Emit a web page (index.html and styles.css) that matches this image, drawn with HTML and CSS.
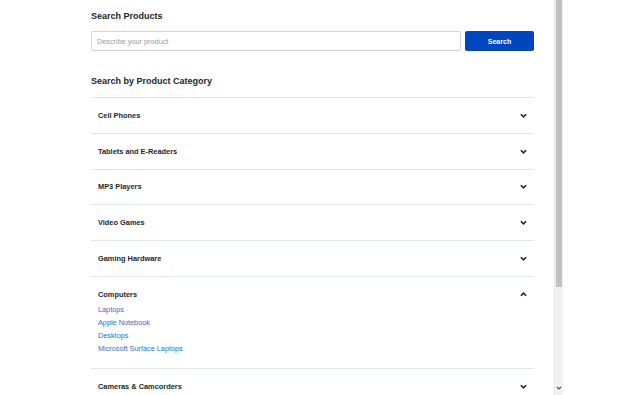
FILE: index.html
```html
<!DOCTYPE html>
<html lang="en">
<head>
<meta charset="utf-8">
<title>Search Products</title>
<link rel="stylesheet" href="styles.css">
</head>
<body>
<div class="frame">
  <main class="page">
    <h2 class="heading">Search Products</h2>
    <form class="search">
      <input class="search-input" type="text" placeholder="Describe your product">
      <button class="search-btn" type="button">Search</button>
    </form>
    <h2 class="heading heading-cat">Search by Product Category</h2>
    <ul class="accordion">
      <li class="row"><div class="row-head"><span>Cell Phones</span><svg class="chev" viewBox="0 0 8 5"><path d="M1 1l3 3 3-3"/></svg></div></li>
      <li class="row"><div class="row-head"><span>Tablets and E-Readers</span><svg class="chev" viewBox="0 0 8 5"><path d="M1 1l3 3 3-3"/></svg></div></li>
      <li class="row"><div class="row-head"><span>MP3 Players</span><svg class="chev" viewBox="0 0 8 5"><path d="M1 1l3 3 3-3"/></svg></div></li>
      <li class="row"><div class="row-head"><span>Video Games</span><svg class="chev" viewBox="0 0 8 5"><path d="M1 1l3 3 3-3"/></svg></div></li>
      <li class="row"><div class="row-head"><span>Gaming Hardware</span><svg class="chev" viewBox="0 0 8 5"><path d="M1 1l3 3 3-3"/></svg></div></li>
      <li class="row open">
        <div class="row-head"><span>Computers</span><svg class="chev" viewBox="0 0 8 5"><path d="M1 4l3-3 3 3"/></svg></div>
        <ul class="links">
          <li><a href="#">Laptops</a></li>
          <li><a href="#">Apple Notebook</a></li>
          <li><a href="#">Desktops</a></li>
          <li><a href="#">Microsoft Surface Laptops</a></li>
        </ul>
      </li>
      <li class="row"><div class="row-head"><span>Cameras &amp; Camcorders</span><svg class="chev" viewBox="0 0 8 5"><path d="M1 1l3 3 3-3"/></svg></div></li>
    </ul>
  </main>
  <div class="scrollbar">
    <div class="thumb"></div>
    <div class="track"></div>
    <svg class="sb-arrow" viewBox="0 0 6 4"><path d="M1 1l2 2 2-2"/></svg>
  </div>
</div>
</body>
</html>
```

FILE: styles.css
```css
* { box-sizing: border-box; }
html, body { margin: 0; padding: 0; background: #fff; }
body {
  font-family: "Liberation Sans", Arial, sans-serif;
  color: #1d252c;
  width: 640px;
  height: 395px;
  overflow: hidden;
}
.frame {
  display: flex;
  width: 563px;
  height: 395px;
}
.page {
  width: 554px;
  height: 395px;
  overflow: hidden;
  padding: 11px 20px 0 91px;
}
.heading {
  margin: 0;
  font-size: 9px;
  line-height: 11px;
  font-weight: bold;
  color: #1d252c;
}
.search {
  display: flex;
  gap: 4px;
  margin: 9px 0 0;
  width: 443px;
  height: 20px;
}
.search-input {
  flex: 1;
  height: 20px;
  border: 1px solid #d0d5dd;
  border-radius: 2px;
  padding: 0 5px;
  font-family: "Liberation Sans", Arial, sans-serif;
  font-size: 7.3px;
  color: #1d252c;
  outline: none;
}
.search-input::placeholder { color: #979ba3; }
.search-btn {
  width: 69px;
  height: 20px;
  border: 0;
  border-radius: 2px;
  background: #0046be;
  color: #fff;
  font-family: "Liberation Sans", Arial, sans-serif;
  font-size: 7px;
  font-weight: bold;
  padding: 0;
}
.heading-cat { margin-top: 25px; }
.accordion {
  list-style: none;
  margin: 10px 0 0;
  padding: 0;
  width: 443px;
}
.row {
  border-top: 1px solid #e0e6ef;
}
.row-head {
  display: flex;
  align-items: center;
  justify-content: space-between;
  padding: 11.9px 7px 11.9px 7px;
  font-size: 7.4px;
  line-height: 11px;
  font-weight: bold;
  color: #1d252c;
}
.chev {
  width: 7px;
  height: 5px;
  fill: none;
  stroke: #1d252c;
  stroke-width: 1.8;
}
.open .row-head { padding-bottom: 3px; }
.links {
  list-style: none;
  margin: 0;
  padding: 0 7px 13px;
}
.links li {
  font-size: 7.3px;
  line-height: 13px;
}
.links a {
  color: #2a6fd0;
  text-decoration: none;
}
.scrollbar {
  position: relative;
  width: 9px;
  height: 395px;
  display: flex;
  flex-direction: column;
  background: #f1f1f1;
  border-left: 1px solid #e8e8e8;
}
.thumb {
  height: 287px;
  background: #c1c1c1;
  margin: 0 1px;
}
.track { flex: 1; }
.sb-arrow {
  position: absolute;
  left: 1px;
  bottom: 5px;
  width: 6px;
  height: 4px;
  fill: none;
  stroke: #505050;
  stroke-width: 1.2;
}
```
